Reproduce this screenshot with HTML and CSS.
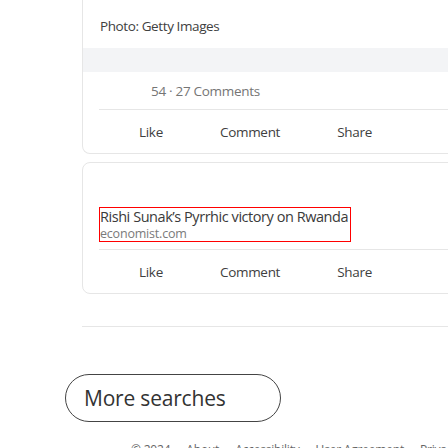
FILE: index.html
```html
<!DOCTYPE html>
<html>
<head>
<meta charset="utf-8">
<link rel="stylesheet" href="styles.css">
</head>
<body>
<div class="feed">
  <div class="card card-top">
    <div class="caption">Photo: Getty Images</div>
    <div class="band"></div>
    <div class="stats">54 · 27 Comments</div>
    <div class="actions">
      <span>Like</span><span>Comment</span><span>Share</span>
    </div>
  </div>
  <div class="card card-link">
    <div class="link-box">
      <div class="link-title">Rishi Sunak’s Pyrrhic victory on Rwanda</div>
      <div class="link-url">economist.com</div>
    </div>
    <div class="actions actions-ruled">
      <span>Like</span><span>Comment</span><span>Share</span>
    </div>
  </div>
  <div class="rule"></div>
</div>
<div class="more-wrap">
  <button class="more">More searches</button>
</div>
<div class="footer">
  <span>© 2024</span><span>About</span><span>Accessibility</span><span>User Agreement</span><span>Privacy Policy</span>
</div>
</body>
</html>
```
FILE: styles.css
```css
html, body {
  margin: 0;
  padding: 0;
  background: #fff;
  overflow: hidden;
  width: 448px;
  height: 448px;
}
body {
  font-family: "Open Sans", "Noto Sans", sans-serif;
  color: #333;
  letter-spacing: -0.3px;
}
.feed {
  margin-left: 82px;
  width: 620px;
}
.card {
  border: 1px solid #e6e6e6;
  border-radius: 8px;
  background: #fff;
}
.card-top {
  border-top: none;
  border-top-left-radius: 0;
  border-top-right-radius: 0;
}
.caption {
  padding: 16px 0 12px 17px;
  font-size: 13.5px;
  line-height: 20px;
  color: #404040;
  letter-spacing: -0.4px;
}
.band {
  height: 24px;
  background: #f3f4f6;
}
.stats {
  margin-left: 16px;
  padding: 9px 0 8px 52px;
  line-height: 20px;
  font-size: 13.5px;
  color: #757575;
  border-bottom: 1px solid #e6e6e6;
}
.actions {
  display: flex;
  gap: 57px;
  margin-left: 16px;
  padding-left: 40px;
  height: 43px;
  align-items: center;
  font-size: 13.5px;
  color: #404040;
}
.card-link {
  margin-top: 8px;
  padding-top: 44px;
}
.link-box {
  margin-left: 16px;
  width: 250px;
  border: 1px solid #ff0000;
  white-space: nowrap;
  overflow: hidden;
}
.link-title {
  font-size: 14.5px;
  line-height: 18px;
  color: #3a3a3a;
  letter-spacing: -0.45px;
}
.link-url {
  font-size: 12.5px;
  line-height: 15px;
  color: #7a7a7a;
  letter-spacing: -0.2px;
}
.actions-ruled {
  margin-top: 7px;
  border-top: 1px solid #e6e6e6;
}
.rule {
  margin-top: 32px;
  border-top: 1px solid #e6e6e6;
}
.more-wrap {
  margin: 47px 0 0 65px;
}
.more {
  width: 216px;
  height: 48px;
  border: 1px solid #444;
  border-radius: 24px;
  background: #fff;
  font-family: "Open Sans", "Noto Sans", sans-serif;
  font-size: 21px;
  letter-spacing: -0.2px;
  color: #333;
  text-align: left;
  padding: 0 0 0 18px;
}
.footer {
  display: flex;
  gap: 16px;
  margin: 20px 0 0 131px;
  font-size: 12px;
  line-height: 16px;
  color: #666;
  letter-spacing: -0.2px;
  white-space: nowrap;
}
```
